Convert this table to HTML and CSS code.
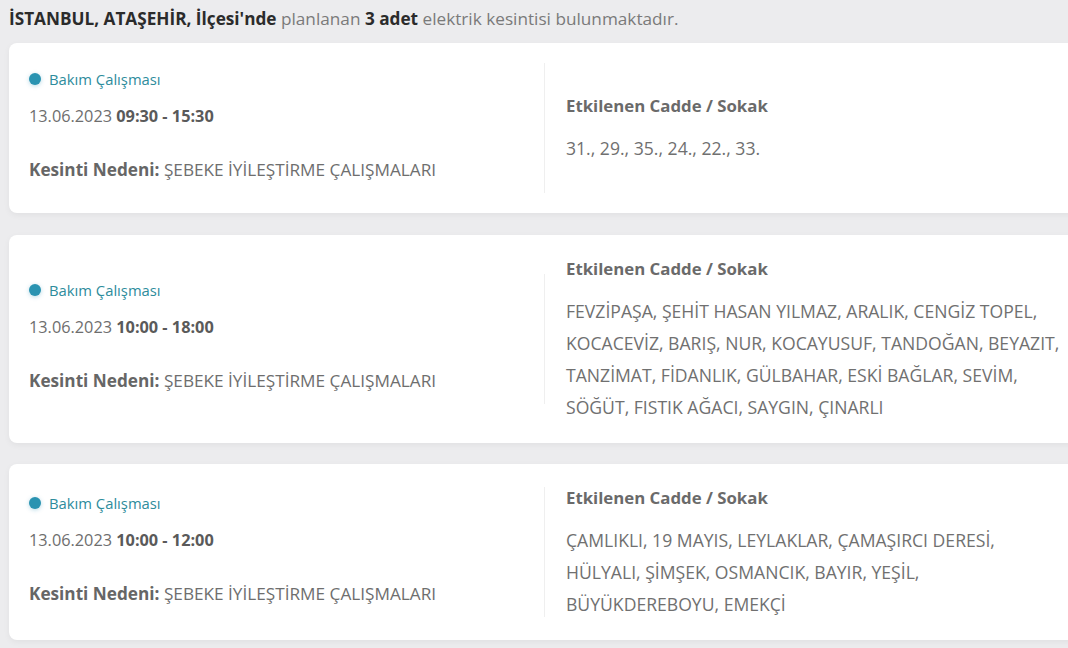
FILE: index.html
```html
<!DOCTYPE html>
<html lang="tr">
<head>
<meta charset="utf-8">
<title>Elektrik Kesintileri</title>
<link rel="stylesheet" href="styles.css">
</head>
<body>
<div class="page">
  <p class="summary"><strong>İSTANBUL, ATAŞEHİR, İlçesi'nde</strong> planlanan <strong>3 adet</strong> elektrik kesintisi bulunmaktadır.</p>

  <div class="card">
    <div class="info">
      <div class="badge"><span class="dot"></span>Bakım Çalışması</div>
      <div class="date">13.06.2023 <b>09:30 - 15:30</b></div>
      <div class="reason"><b>Kesinti Nedeni:</b> ŞEBEKE İYİLEŞTİRME ÇALIŞMALARI</div>
    </div>
    <div class="streets">
      <div class="streets-title">Etkilenen Cadde / Sokak</div>
      <div class="streets-list">31., 29., 35., 24., 22., 33.</div>
    </div>
  </div>

  <div class="card">
    <div class="info">
      <div class="badge"><span class="dot"></span>Bakım Çalışması</div>
      <div class="date">13.06.2023 <b>10:00 - 18:00</b></div>
      <div class="reason"><b>Kesinti Nedeni:</b> ŞEBEKE İYİLEŞTİRME ÇALIŞMALARI</div>
    </div>
    <div class="streets">
      <div class="streets-title">Etkilenen Cadde / Sokak</div>
      <div class="streets-list">FEVZİPAŞA, ŞEHİT HASAN YILMAZ, ARALIK, CENGİZ TOPEL, KOCACEVİZ, BARIŞ, NUR, KOCAYUSUF, TANDOĞAN, BEYAZIT, TANZİMAT, FİDANLIK, GÜLBAHAR, ESKİ BAĞLAR, SEVİM, SÖĞÜT, FISTIK AĞACI, SAYGIN, ÇINARLI</div>
    </div>
  </div>

  <div class="card card-last">
    <div class="info">
      <div class="badge"><span class="dot"></span>Bakım Çalışması</div>
      <div class="date">13.06.2023 <b>10:00 - 12:00</b></div>
      <div class="reason"><b>Kesinti Nedeni:</b> ŞEBEKE İYİLEŞTİRME ÇALIŞMALARI</div>
    </div>
    <div class="streets">
      <div class="streets-title">Etkilenen Cadde / Sokak</div>
      <div class="streets-list">ÇAMLIKLI, 19 MAYIS, LEYLAKLAR, ÇAMAŞIRCI DERESİ, HÜLYALI, ŞİMŞEK, OSMANCIK, BAYIR, YEŞİL, BÜYÜKDEREBOYU, EMEKÇİ</div>
    </div>
  </div>
</div>
</body>
</html>
```

FILE: styles.css
```css
html, body {
  margin: 0;
  padding: 0;
  background: #ececee;
  overflow: hidden;
}

.page {
  width: 1090px;
  padding: 0 0 0 9px;
  font-family: "Open Sans", "Liberation Sans", sans-serif;
  color: #6b6b6b;
}

.summary {
  margin: 0;
  padding: 7px 0 12px 0;
  font-size: 17.2px;
  line-height: 24px;
  color: #7a7a7a;
}

.summary strong {
  color: #2b2b2b;
  font-weight: 700;
}

.card {
  display: flex;
  align-items: center;
  width: 1075px;
  background: #ffffff;
  border-radius: 8px;
  box-shadow: 0 2px 6px rgba(0, 0, 0, 0.05);
  padding: 20px 0;
  margin-bottom: 22px;
  box-sizing: border-box;
}

.card-last {
  margin-top: -1px;
}

.info {
  flex: 0 0 536px;
  box-sizing: border-box;
  height: 130px;
  padding: 6px 0 0 20px;
  border-right: 1px solid #efefef;
}

.badge {
  display: flex;
  align-items: center;
  height: 20px;
  font-size: 14.8px;
  color: #2e8c9c;
}

.dot {
  width: 12px;
  height: 12px;
  border-radius: 50%;
  background: #2a93b1;
  margin-right: 8px;
  box-shadow: 0 1px 4px rgba(42, 147, 177, 0.35);
}

.date {
  margin-top: 15px;
  font-size: 16.3px;
  line-height: 24px;
  color: #6e6e6e;
}

.date b {
  color: #5a5a5a;
  font-weight: 700;
}

.reason {
  margin-top: 30px;
  font-size: 17.2px;
  line-height: 24px;
  color: #6e6e6e;
}

.reason b {
  color: #666666;
  font-weight: 700;
}

.streets {
  flex: 1;
  padding: 2px 14px 0 21px;
}

.streets-title {
  font-size: 16.8px;
  line-height: 24px;
  font-weight: 700;
  color: #6a6a6a;
}

.streets-list {
  margin-top: 14px;
  font-size: 17.6px;
  line-height: 32px;
  color: #707070;
}
```
